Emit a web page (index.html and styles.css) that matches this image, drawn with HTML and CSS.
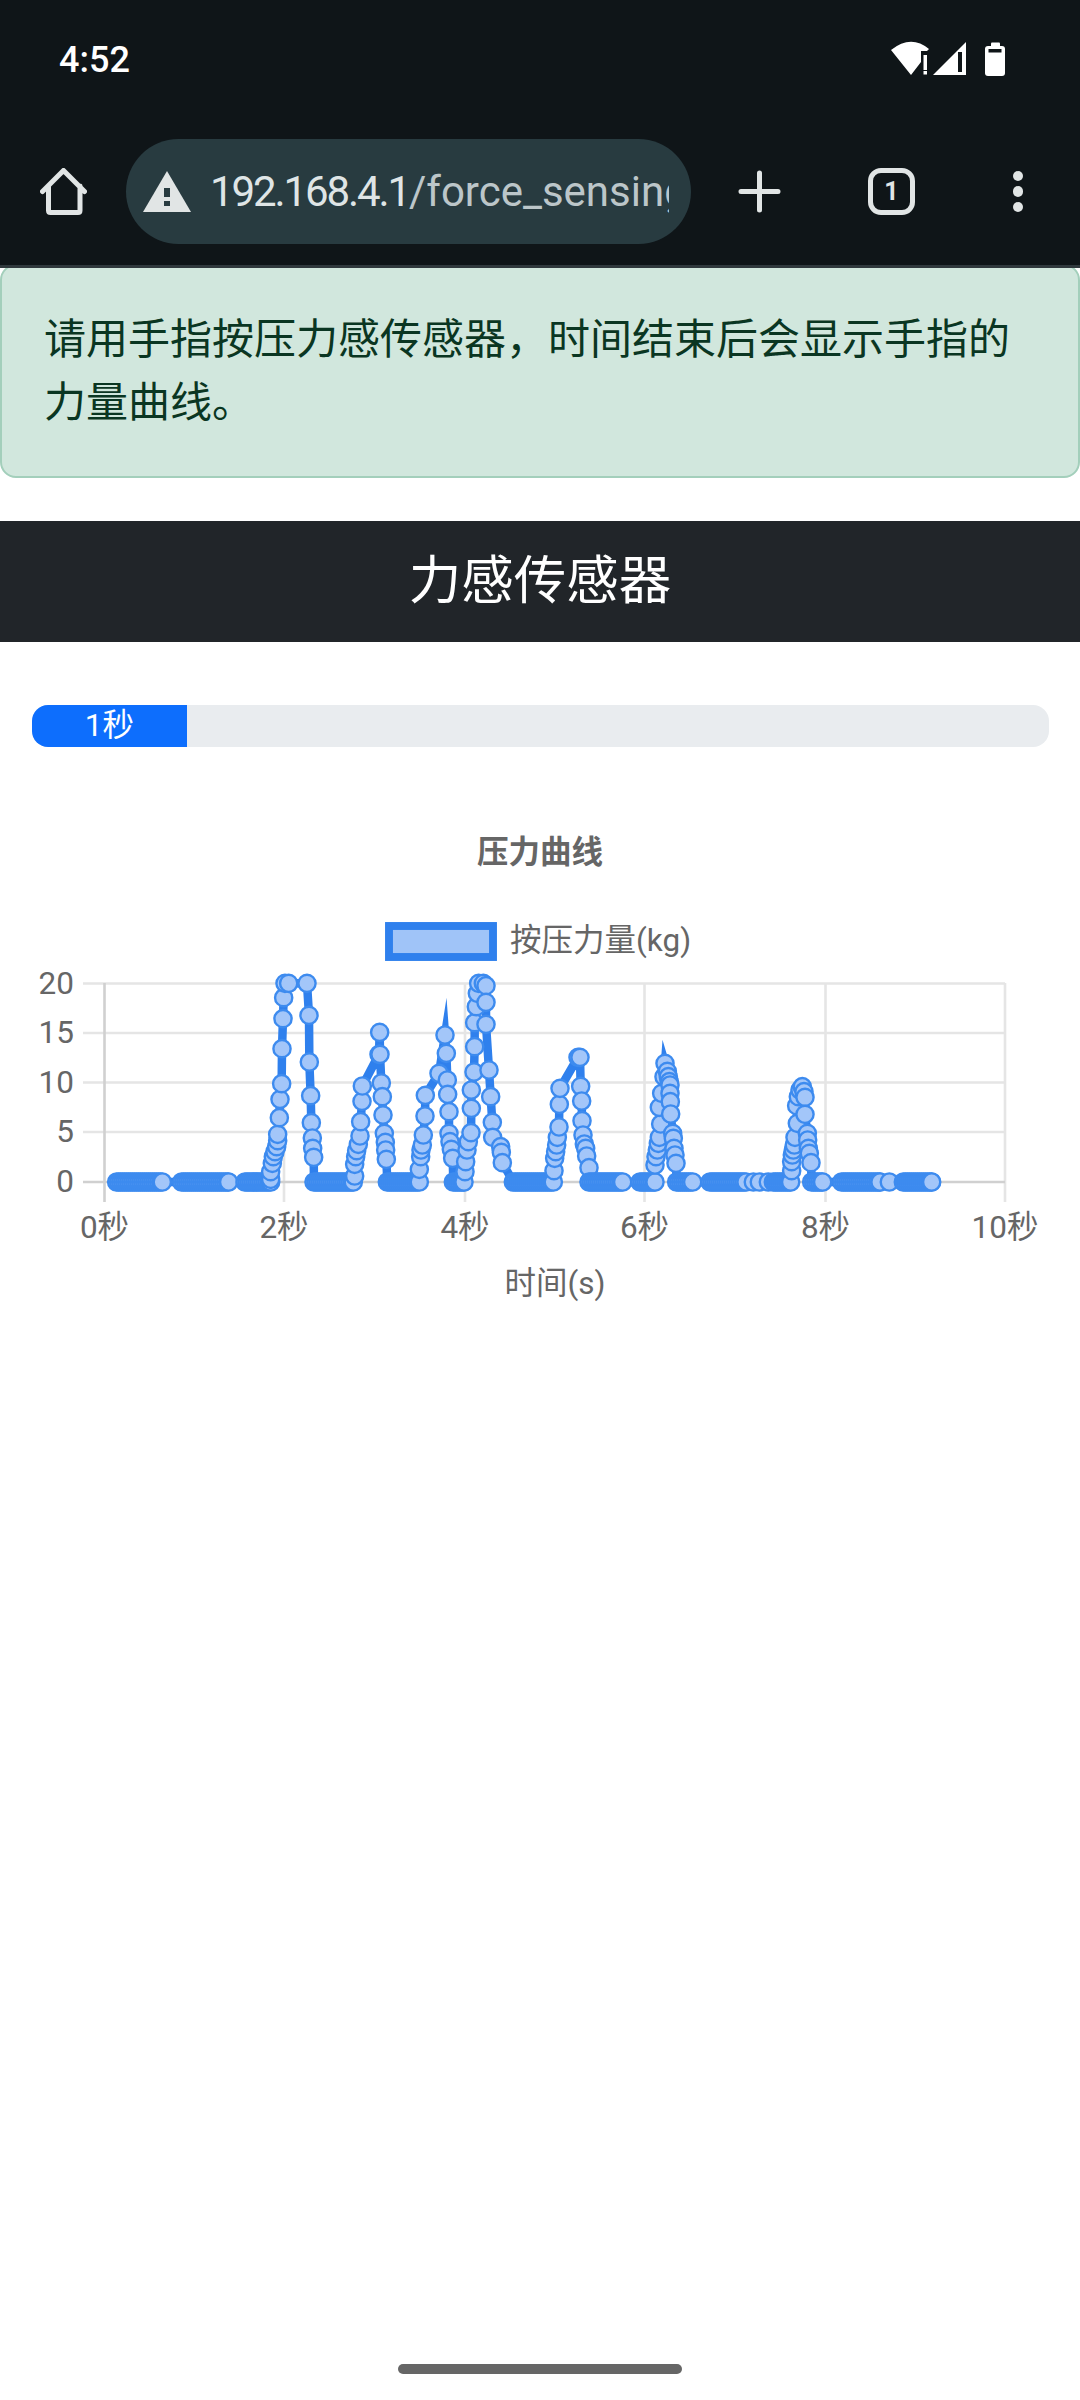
FILE: index.html
```html
<!DOCTYPE html>
<html lang="zh-CN">
<head>
    <meta charset="UTF-8">
    <meta name="viewport" content="width=device-width, initial-scale=1.0">
    <title>力感传感器</title>
    <link rel="stylesheet" href="styles.css">
</head>
<body>
    <header class="chrome">
        <div class="status-bar">
            <span class="clock">4:52</span>
            <svg class="status-icons" viewBox="885 40 125 38" width="125" height="38">
                <path d="M891 50Q911 34 929 49L927 51H921V62L911 75Z"/>
                <rect x="923.5" y="55" width="3.5" height="15"/>
                <rect x="923.5" y="71" width="3.5" height="3.5"/>
                <path d="M966 42V75H933Z"/>
                <rect class="cut" x="958" y="52" width="4" height="20"/>
                <rect x="985" y="46" width="20" height="30" rx="3"/>
                <rect x="991" y="42.5" width="9" height="5" rx="1"/>
                <rect class="cut" x="988.5" y="49" width="13" height="3.5"/>
            </svg>
        </div>
        <div class="toolbar">
            <div class="slot slot-home">
                <svg class="icon" viewBox="0 0 47 47" width="47" height="47">
                    <path class="stroke" d="M2.5 23.5L23.5 2.5L44.5 23.5M8.5 18V42.5Q8.5 44.5 10.5 44.5H38Q40 44.5 40 42.5V18"/>
                </svg>
            </div>
            <div class="omnibox">
                <svg class="warn" viewBox="0 0 48 41" width="48" height="41">
                    <path d="M0 41L24 0L48 41Z"/>
                    <rect class="cut-box" x="21" y="17" width="6" height="9"/>
                    <rect class="cut-box" x="21" y="30" width="6" height="5"/>
                </svg>
                <div class="url"><span class="host">192.168.4.1</span>/force_sensing.html</div>
            </div>
            <div class="slot slot-new">
                <svg class="icon" viewBox="0 0 43 43" width="43" height="43">
                    <path class="stroke" d="M21.5 3V40M3 21.5H40"/>
                </svg>
            </div>
            <div class="slot slot-tabs">
                <div class="tab-count">1</div>
            </div>
            <div class="slot slot-menu">
                <span class="dot"></span>
                <span class="dot"></span>
                <span class="dot"></span>
            </div>
        </div>
    </header>

    <main>
        <div class="alert">请用手指按压力感传感器，时间结束后会显示手指的力量曲线。</div>

        <h1 class="title-bar">力感传感器</h1>

        <div class="progress">
            <div class="progress-bar">1秒</div>
        </div>

        <!-- coordinates in this svg are page pixels, see the viewBox -->
        <svg id="chart" class="chart" viewBox="0 800 1080 520" width="1080" height="520">
            <text class="chart-title" x="540" y="852">压力曲线</text>

            <rect class="legend-box" x="389" y="926" width="104" height="31"/>
            <text class="chart-label" x="510" y="951">按压力量(kg)</text>

            <g class="grid">
                <path d="M83 983.5H1005M83 1033H1005M83 1082.5H1005M83 1132H1005"/>
                <path d="M284 983V1202M465 983V1202M644.5 983V1202M825.5 983V1202M1005 983V1202"/>
            </g>
            <path class="grid-zero" d="M83 1182H1005M104.5 983V1202"/>

            <g class="chart-label y-ticks">
                <text x="74" y="994">20</text>
                <text x="74" y="1043">15</text>
                <text x="74" y="1092.5">10</text>
                <text x="74" y="1142">5</text>
                <text x="74" y="1192">0</text>
            </g>
            <g class="chart-label x-ticks">
                <text x="104.5" y="1238">0秒</text>
                <text x="284" y="1238">2秒</text>
                <text x="465" y="1238">4秒</text>
                <text x="644.5" y="1238">6秒</text>
                <text x="825.5" y="1238">8秒</text>
                <text x="1005" y="1238">10秒</text>
                <text x="555" y="1294">时间(s)</text>
            </g>

            <polyline id="forceLine" class="force-line"/>
            <g id="forcePoints" class="force-points"></g>
        </svg>
    </main>

    <div class="gesture-pill"></div>

    <script src="chart.js"></script>
</body>
</html>
```

FILE: styles.css
```css
body {
    font-family: Roboto, 'Noto Sans CJK SC', sans-serif;
    margin: 0;
    padding: 0;
    height: 2400px;
    overflow: hidden;
    background-color: #fff;
}

.chrome {
    position: relative;
    z-index: 1;
    background-color: #0f1518;
    border-bottom: 3px solid #30393d;
}

.status-bar {
    height: 118px;
    padding: 0 70px 0 59px;
    display: flex;
    align-items: center;
    justify-content: space-between;
}

.clock {
    margin-top: 2px;
    color: #fff;
    font-size: 36px;
    font-weight: 500;
}

.status-icons {
    fill: #fff;
}

.status-icons .cut {
    fill: #0f1518;
}

.toolbar {
    height: 147px;
    display: flex;
    align-items: center;
}

.slot {
    display: flex;
    align-items: center;
    justify-content: center;
}

.slot-home {
    width: 126px;
}

.slot-new {
    width: 136px;
}

.slot-tabs {
    width: 129px;
}

.slot-menu {
    width: 124px;
    flex-direction: column;
    gap: 5px;
}

.icon .stroke {
    fill: none;
    stroke: #e1e5e5;
    stroke-width: 5;
    stroke-linecap: round;
    stroke-linejoin: round;
}

.omnibox {
    width: 565px;
    height: 105px;
    box-sizing: border-box;
    padding: 0 22px 0 17px;
    display: flex;
    align-items: center;
    gap: 19px;
    background-color: #283b40;
    border-radius: 53px;
}

.warn {
    flex: none;
    fill: #e1e5e5;
}

.warn .cut-box {
    fill: #283b40;
}

.url {
    flex: 1;
    overflow: hidden;
    white-space: nowrap;
    font-size: 42px;
    color: #bcc6c9;
}

.host {
    color: #dfe5e6;
    letter-spacing: -2.1px;
}

.tab-count {
    width: 47px;
    height: 47px;
    box-sizing: border-box;
    border: 5.5px solid #e1e5e5;
    border-radius: 13px;
    color: #e1e5e5;
    font-size: 25px;
    font-weight: 700;
    display: flex;
    align-items: center;
    justify-content: center;
}

.dot {
    width: 10.5px;
    height: 10.5px;
    border-radius: 50%;
    background-color: #e1e5e5;
}

.alert {
    margin: -4px 0 43px;
    padding: 42px;
    border: 2.6px solid #a3cfbb;
    border-radius: 16px;
    background-color: #d1e7dd;
    color: #0a3622;
    font-size: 42px;
    line-height: 63px;
}

.title-bar {
    margin: 0;
    padding: 29px 0;
    background-color: #212529;
    color: #fff;
    font-size: 52.5px;
    font-weight: 400;
    line-height: 63px;
    text-align: center;
}

.progress {
    margin: 63px 31px 53px 32px;
    height: 42px;
    overflow: hidden;
    background-color: #e9ecef;
    border-radius: 16px;
}

.progress-bar {
    width: 15.2%;
    height: 100%;
    background-color: #0d6efd;
    color: #fff;
    font-size: 31.5px;
    line-height: 42px;
    text-align: center;
}

.chart {
    display: block;
}

.chart-title {
    fill: #666;
    font-size: 31.5px;
    font-weight: 700;
    text-anchor: middle;
    dominant-baseline: central;
}

.chart-label {
    fill: #666;
    font-size: 31.5px;
}

.y-ticks {
    text-anchor: end;
}

.x-ticks {
    text-anchor: middle;
}

.legend-box {
    fill: #a0c4f8;
    stroke: #2f80ed;
    stroke-width: 7.9;
}

.grid {
    fill: none;
    stroke: #e5e5e5;
    stroke-width: 2.6;
}

.grid-zero {
    fill: none;
    stroke: #d0d0d0;
    stroke-width: 2.6;
}

.force-line {
    fill: none;
    stroke: #2f80ed;
    stroke-width: 8.5;
    stroke-linejoin: miter;
    stroke-miterlimit: 10;
}

.force-points circle {
    fill: #a3c6f9;
    stroke: #3d8bef;
    stroke-width: 2.4;
}

.gesture-pill {
    position: absolute;
    left: 398px;
    top: 2364px;
    width: 284px;
    height: 10px;
    border-radius: 5px;
    background-color: #666;
}
```

FILE: chart.js
```js
// recorded samples, x/y read off three 3x crops of the trace, ox is the crop's left edge
const TOP = 900;
const ZERO = 846;

function pts(ox, list) {
    return list.map(([x, y]) => [ox + x / 3, TOP + y / 3]);
}

// idle stretch at 0 kg, points so close together that only their borders show
function run(ox, from, to) {
    const out = [];
    for (let x = from; x < to; x += 6) {
        out.push([x, ZERO]);
    }
    out.push([to, ZERO]);
    return pts(ox, out);
}

const samples = [
    ...run(0, 350, 487),
    ...run(0, 545, 686),
    ...run(0, 735, 812),
    ...pts(0, [[812, 838], [812, 815], [817, 790], [820, 770], [825, 755], [830, 740], [833, 722], [833, 703],
        [838, 653], [840, 598], [845, 551], [846, 446], [849, 356], [851, 293], [855, 250], [866, 250],
        [921, 250], [927, 346], [928, 486], [932, 587], [934, 668], [937, 714], [938, 745], [941, 772]]),
    ...run(0, 942, 1060),
    ...pts(340, [[44, 828], [44, 793], [47, 770], [50, 752], [55, 733], [60, 708], [62, 665], [66, 604], [67, 558],
        [117, 463], [119, 397], [120, 463], [124, 549], [127, 590], [129, 645], [133, 700], [136, 727],
        [137, 750], [139, 778]]),
    ...run(340, 142, 238),
    ...pts(340, [[238, 808], [242, 770], [243, 750], [247, 735], [250, 705], [255, 648], [256, 586], [297, 520],
        [315, 405], [319, 460], [322, 540], [323, 583], [327, 635], [327, 700], [330, 725], [334, 748], [338, 775]]),
    ...run(340, 340, 372),
    ...pts(340, [[375, 815], [377, 785], [381, 750], [385, 725], [393, 698], [394, 625], [394, 570], [402, 516],
        [404, 440], [404, 368], [409, 320], [412, 280], [416, 250], [430, 250], [438, 257], [438, 307], [438, 373],
        [447, 510], [452, 590], [457, 667], [458, 712], [482, 740], [484, 757], [487, 788]]),
    ...run(340, 520, 640),
    ...pts(340, [[642, 812], [644, 775], [647, 755], [650, 735], [652, 712], [657, 681], [658, 613], [660, 565],
        [714, 472], [720, 472], [722, 559], [725, 603], [726, 662], [729, 705], [733, 732], [737, 745], [740, 768],
        [747, 803]]),
    ...run(340, 747, 848),
    ...run(340, 900, 945),
    ...pts(340, [[945, 795], [948, 770], [952, 750], [955, 730], [958, 712], [962, 672], [958, 622], [965, 580],
        [972, 530], [975, 490], [982, 514], [985, 530], [988, 545], [990, 555], [990, 580], [991, 605], [992, 642],
        [998, 700], [1000, 715], [1002, 745], [1005, 765], [1008, 790]]),
    ...run(340, 1010, 1058),
    ...run(700, 30, 138),
    ...pts(700, [[160, 846], [178, 846], [205, 846]]),
    ...run(700, 220, 272),
    ...pts(700, [[275, 812], [275, 785], [277, 765], [280, 750], [283, 735], [285, 712], [292, 670], [290, 617],
        [295, 590], [300, 570], [307, 560], [312, 575], [315, 592], [315, 643], [322, 700], [323, 720], [325, 745],
        [328, 760], [333, 788]]),
    ...run(700, 335, 368),
    ...run(700, 425, 540),
    ...pts(700, [[568, 846]]),
    ...run(700, 610, 695),
];

document.getElementById('forceLine').setAttribute('points', samples.map(p => p.join(',')).join(' '));

const group = document.getElementById('forcePoints');
samples.forEach(([x, y]) => {
    const dot = document.createElementNS('http://www.w3.org/2000/svg', 'circle');
    dot.setAttribute('cx', x);
    dot.setAttribute('cy', y);
    dot.setAttribute('r', 8.6);
    group.appendChild(dot);
});
```
